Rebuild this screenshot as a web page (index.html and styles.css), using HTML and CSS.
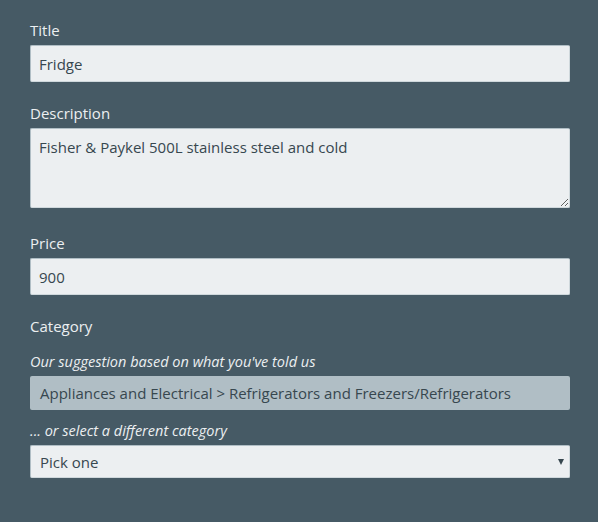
FILE: index.html
```html
<!DOCTYPE html>
<html>
<head>
	<title>Listing</title>
	<link rel="stylesheet" href="styles.css">
</head>
<body>
	<form class="listing">
		<div class="group">
			<label class="label" for="title">Title</label>
			<input class="field" id="title" type="text" value="Fridge">
		</div>
		<div class="group">
			<label class="label" for="desc">Description</label>
			<textarea class="field area" id="desc">Fisher &amp; Paykel 500L stainless steel and cold</textarea>
		</div>
		<div class="group">
			<label class="label" for="price">Price</label>
			<input class="field" id="price" type="text" value="900">
		</div>
		<div class="group">
			<div class="label">Category</div>
			<p class="hint first">Our suggestion based on what you've told us</p>
			<div class="suggest">Appliances and Electrical &gt; Refrigerators and Freezers/Refrigerators</div>
			<p class="hint">... or select a different category</p>
			<div class="pick">
				<select class="field choose">
					<option>Pick one</option>
				</select>
			</div>
		</div>
	</form>
</body>
</html>
```

FILE: styles.css
```css
*{
	margin: 0;
	padding: 0;
	box-sizing: border-box;
}
body{
	background: #465a65;
	font-family: "Open Sans", "Noto Sans", sans-serif;
	font-size: 15px;
	color: #eceff1;
}
.listing{
	width: 540px;
	margin: 0 0 0 30px;
	padding-top: 19px;
}
.group{
	margin-bottom: 20px;
}
.label{
	display: block;
	font-size: 15px;
	line-height: 22px;
	margin-bottom: 4px;
}
.field{
	display: block;
	width: 100%;
	height: 37px;
	padding: 0 8px;
	font-family: inherit;
	font-size: 15px;
	color: #37474f;
	background: #eceff1;
	border: 1px solid #cfd8dc;
	border-top-color: #b0bec5;
	border-left-color: #b0bec5;
	border-radius: 2px;
	outline: none;
}
.area{
	height: 80px;
	padding: 8px 8px;
	line-height: 20px;
	resize: vertical;
	margin-bottom: 24px;
}
.group:nth-child(2){
	margin-bottom: 0;
}
.hint{
	font-style: italic;
	font-size: 14.5px;
	line-height: 20px;
	margin: 11px 0 4px;
}
.hint.first{
	margin-top: 15px;
}
.suggest{
	height: 34px;
	line-height: 34px;
	padding: 0 10px;
	background: #b0bec5;
	color: #37474f;
	border-radius: 2px;
	font-size: 15px;
}
.pick{
	position: relative;
}
.choose{
	height: 33px;
	padding: 0 9px;
	-webkit-appearance: none;
	appearance: none;
}
.pick:after{
	content: "";
	position: absolute;
	right: 6px;
	top: 14px;
	border-left: 3.5px solid transparent;
	border-right: 3.5px solid transparent;
	border-top: 6px solid #37474f;
}
```
